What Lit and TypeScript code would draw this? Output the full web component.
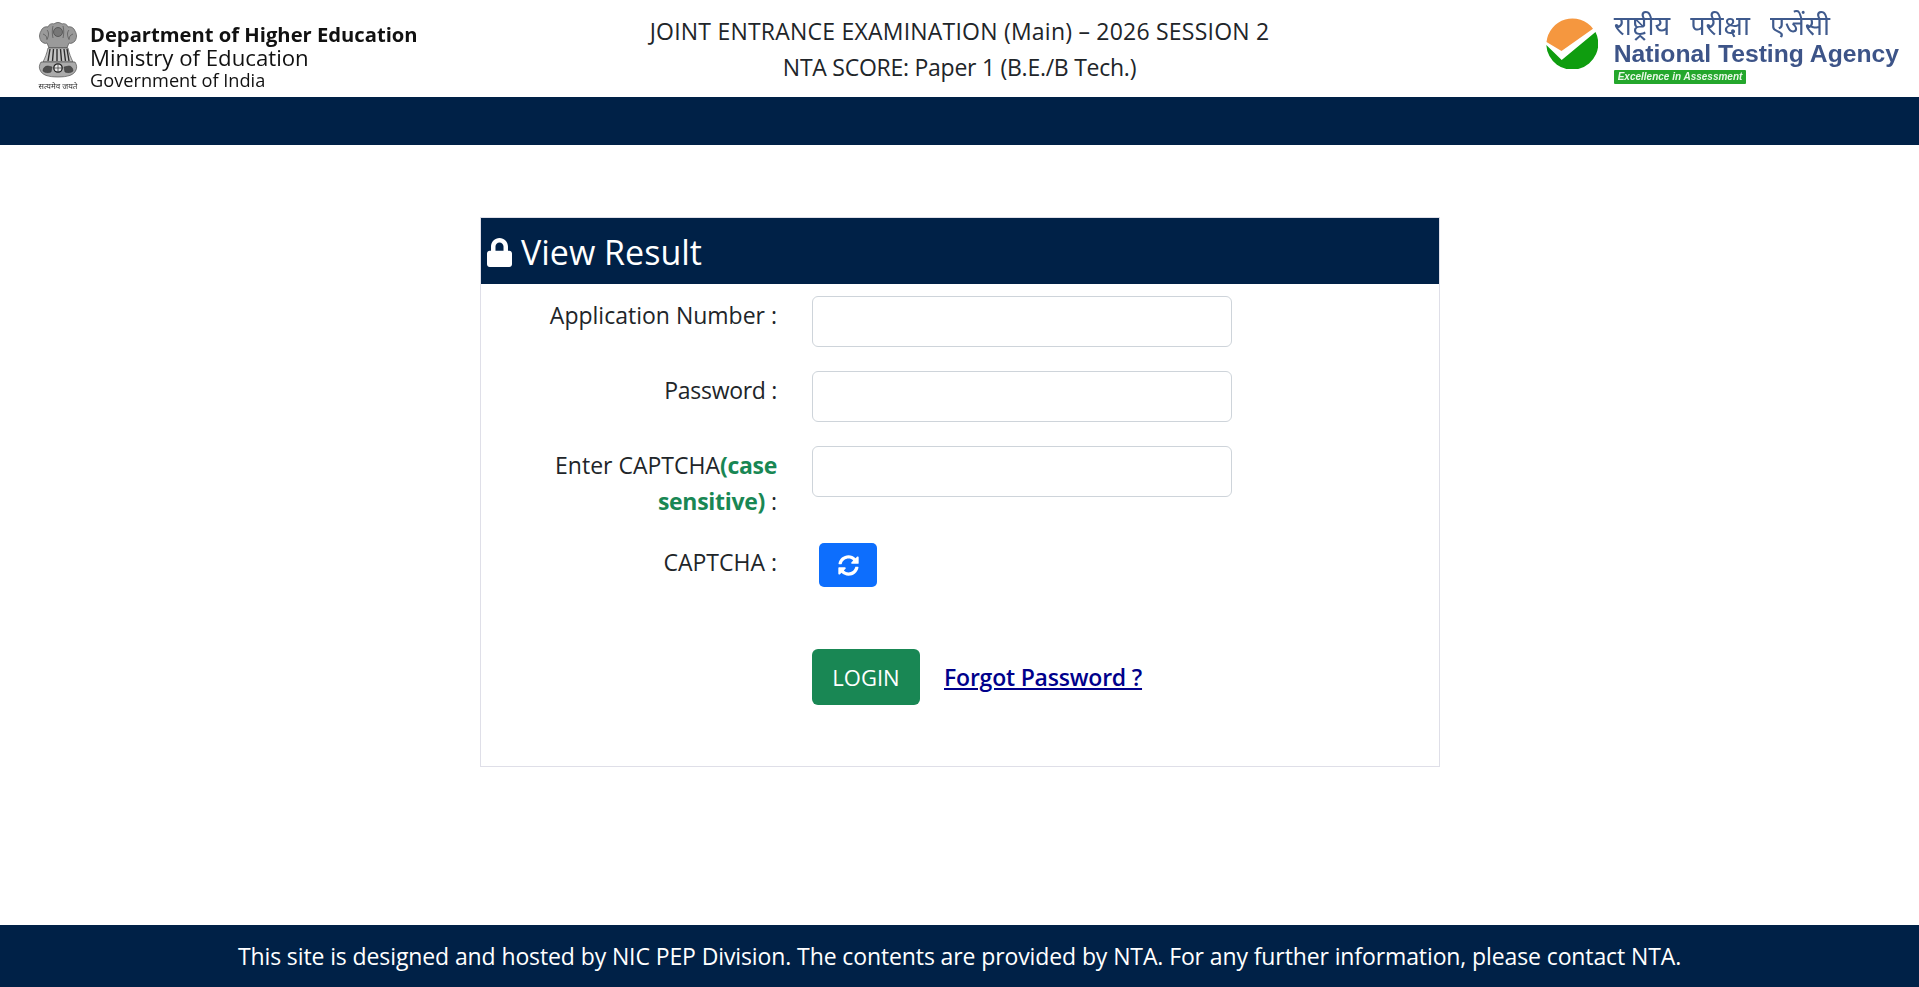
import { LitElement, html, css, svg } from "lit";
import { customElement } from "lit/decorators.js";

const emblem = svg`<svg class="emblem" viewBox="0 0 46 69" width="46" height="69" aria-hidden="true">
  <g stroke="#3a3a3a" stroke-width=".6">
    <path d="M6 9c1-3 4-5 7-4 1-3 4-4 6-3 2-2 6-2 8 0 2-1 5 0 6 3 3-1 6 1 7 4 2 3 2 7 0 10-2 2-4 3-6 2l-2 5H14l-2-5c-2 1-4 0-6-2-2-3-2-7 0-10z" fill="#9a9a9a"/>
    <path d="M12 8c2 2 2 6 0 9M18 4c-1 4-1 8 0 12M28 4c1 4 1 8 0 12M34 8c-2 2-2 6 0 9M8 12c3 1 4 3 4 6M38 12c-3 1-4 3-4 6" fill="none" stroke="#444"/>
    <circle cx="23" cy="10" r="4.500" fill="#777"/>
    <path d="M13 26h20c1 5 3 10 5 14H8c2-4 4-9 5-14z" fill="#c4c4c4"/>
    <path d="M15 27l-2 12M18.500 27l-1 12M22 27v12M25.500 27l1 12M29 27l1.500 12M32 27l2 12" fill="none" stroke="#2e2e2e" stroke-width="1.400"/>
    <path d="M6 40h34c2 3 2 6 1 8-2 5-8 7-18 7S7 53 5 48c-1-2-1-5 1-8z" fill="#ababab"/>
    <circle cx="23" cy="46" r="4.200" fill="#e8e8e8" stroke="#222" stroke-width="1.300"/>
    <path d="M23 42v8M19 46h8" stroke="#333" stroke-width=".7"/>
    <path d="M8 49c0-3 2-5 5-5l4 1-1 5c-3 1-6 1-8-1zM29 45l5-1c2 0 4 2 4 5-2 2-5 2-8 1z" fill="#4f4f4f"/>
  </g>
  <text x="23" y="67" text-anchor="middle" class="motto">सत्यमेव जयते</text>
</svg>`;

const ntaMark = svg`<svg class="mark" viewBox="0 0 52 52" width="52" height="52" aria-hidden="true">
  <path d="M.5 25 15.500 34 47 11.700A26 26 0 0 0 .5 25Z" fill="#f5973f"/>
  <path d="M.3 28 15.700 43 49.500 15A26 26 0 1 1 .3 28Z" fill="#0f9d0f"/>
</svg>`;

const lock = svg`<svg class="lock" viewBox="0 0 448 512" width="25" height="29" preserveAspectRatio="none" aria-hidden="true"><path fill="#fff" d="M400 224h-24v-72C376 68.200 307.800 0 224 0S72 68.200 72 152v72H48c-26.500 0-48 21.500-48 48v192c0 26.500 21.500 48 48 48h352c26.500 0 48-21.500 48-48V272c0-26.500-21.500-48-48-48zm-104 0H152v-72c0-39.700 32.300-72 72-72s72 32.300 72 72v72z"/></svg>`;

const refresh = svg`<svg viewBox="0 0 512 512" width="21" height="21" aria-hidden="true"><path fill="#fff" d="M370.720 133.280C339.458 104.008 298.888 87.962 255.848 88c-77.458.068-144.328 53.178-162.791 126.850-1.344 5.363-6.122 9.150-11.651 9.150H24.103c-7.498 0-13.194-6.807-11.807-14.176C33.933 94.924 134.813 8 256 8c66.448 0 126.791 26.136 171.315 68.685L463.030 40.970C478.149 25.851 504 36.559 504 57.941V192c0 13.255-10.745 24-24 24H345.941c-21.382 0-32.090-25.851-16.971-40.971l41.750-41.749zM32 296h134.059c21.382 0 32.090 25.851 16.971 40.971l-41.750 41.750c31.262 29.273 71.835 45.319 114.876 45.280 77.418-.070 144.315-53.144 162.787-126.849 1.344-5.363 6.122-9.150 11.651-9.150h57.304c7.498 0 13.194 6.807 11.807 14.176C478.067 417.076 377.187 504 256 504c-66.448 0-126.791-26.136-171.315-68.685L48.970 471.030C33.851 486.149 8 475.441 8 454.059V320c0-13.255 10.745-24 24-24z"/></svg>`;

@customElement("app-root")
export class AppRoot extends LitElement {
  static styles = css`
    :host { display: flex; flex-direction: column; height: 987px; overflow: hidden; background: #fff; color: #212529;
      font-family: "Open Sans", "Noto Sans", sans-serif; font-size: 20px; }
    * { box-sizing: border-box; }
    .top { height: 97px; flex: none; display: grid; grid-template-columns: 1fr auto 1fr; align-items: center; overflow: hidden; }
    .moe { display: flex; align-items: flex-start; gap: 9px; padding-left: 35px; height: 97px; }
    .emblem { margin-top: 22px; flex: none; filter: blur(.3px); }
    .motto { font-family: "Noto Sans", "Noto Sans CJK SC", sans-serif; font-size: 8px; fill: #333; }
    .moe-text { display: flex; flex-direction: column; color: #111; padding-top: 23px; filter: blur(.2px); }
    .moe-text b { font-size: 20.200px; font-weight: 700; line-height: 23px; }
    .moe-text .min { font-size: 22.200px; line-height: 24px; }
    .moe-text .gov { font-size: 18.200px; line-height: 20px; }
    .exam { text-align: center; font-size: 23px; line-height: 36px; }
    .l1 { letter-spacing: .22px; }
    .l2 { letter-spacing: -.26px; }
    .nta { justify-self: end; display: flex; align-items: flex-start; gap: 16px; padding-right: 20px; height: 97px; }
    .mark { margin-top: 17px; flex: none; filter: blur(.4px); }
    .nta-text { display: flex; flex-direction: column; align-items: flex-start; padding-top: 9px; filter: blur(.4px); }
    .hi { font-family: "Noto Sans", sans-serif; color: #3f5a8d; font-size: 27px; line-height: 32px; word-spacing: 13px; }
    .en { font-family: "Liberation Sans", sans-serif; font-weight: 700; color: #3d5488; font-size: 24.700px; line-height: 26px; }
    .tag { margin-top: 3px; background: #24a72c; color: #e8f8e8; font-family: "Liberation Sans", sans-serif; font-size: 10px;
      font-style: italic; font-weight: 700; line-height: 14px; padding: 0 4px; border-radius: 1px; }
    .strip { height: 48px; background: #002147; flex: none; }
    main { flex: 1; padding-top: 72px; }
    .card { width: 960px; height: 550px; margin-left: 480px; border: 1px solid #dfdfe8; }
    .head { height: 66px; background: #002147; color: #fff; display: flex; align-items: center; gap: 9px;
      padding: 2px 0 0 6px; font-size: 34px; }
    .head span { line-height: 1; }
    .form { display: grid; grid-template-columns: 296px 420px; column-gap: 35px; row-gap: 24px; padding-top: 12px; align-items: start; }
    .form label { text-align: right; font-size: 23px; line-height: 36px; padding: 1px 0 0 60px; }
    .form label.pw { letter-spacing: -.3px; }
    .form label b { color: #198754; font-weight: 700; letter-spacing: -.3px; }
    .ctl { display: block; width: 420px; height: 51px; border: 1px solid #ced4da; border-radius: 6px; background: #fff; }
    .cap-ctl { padding-left: 7px; }
    .refresh { width: 58px; height: 44px; border: 0; border-radius: 5px; background: #0d6efd; display: flex; align-items: center; justify-content: center; padding: 0; }
    .actions { display: flex; align-items: center; gap: 24px; margin: 62px 0 0 331px; }
    .login { width: 108px; height: 56px; border: 0; border-radius: 6px; background: #198754; color: #fff; font: inherit; font-size: 22px; padding: 0; }
    .forgot { color: #00008b; font-size: 23px; font-weight: 600; letter-spacing: -.2px; text-decoration: underline; }
    footer { height: 62px; flex: none; background: #002147; color: #fff; display: flex; align-items: center; justify-content: center; font-size: 23px; letter-spacing: -.11px; }
  `;

  render() {
    return html`
      <header class="top">
        <div class="moe">
          ${emblem}
          <div class="moe-text">
            <b>Department of Higher Education</b>
            <span class="min">Ministry of Education</span>
            <span class="gov">Government of India</span>
          </div>
        </div>
        <div class="exam"><span class="l1">JOINT ENTRANCE EXAMINATION (Main) – 2026 SESSION 2</span><br /><span class="l2">NTA SCORE: Paper 1 (B.E./B Tech.)</span></div>
        <div class="nta">
          ${ntaMark}
          <div class="nta-text">
            <span class="hi">राष्ट्रीय परीक्षा एजेंसी</span>
            <span class="en">National Testing Agency</span>
            <span class="tag">Excellence in Assessment</span>
          </div>
        </div>
      </header>
      <div class="strip"></div>
      <main>
        <section class="card">
          <div class="head">${lock}<span>View Result</span></div>
          <div class="form">
            <label>Application Number :</label><input class="ctl" />
            <label class="pw">Password :</label><input class="ctl" type="password" />
            <label>Enter CAPTCHA<b>(case sensitive)</b> :</label><input class="ctl" />
            <label>CAPTCHA :</label>
            <div class="cap-ctl"><button class="refresh" aria-label="Refresh">${refresh}</button></div>
          </div>
          <div class="actions">
            <button class="login">LOGIN</button>
            <a class="forgot" href="#">Forgot Password ?</a>
          </div>
        </section>
      </main>
      <footer>This site is designed and hosted by NIC PEP Division. The contents are provided by NTA. For any further information, please contact NTA.</footer>
    `;
  }
}
